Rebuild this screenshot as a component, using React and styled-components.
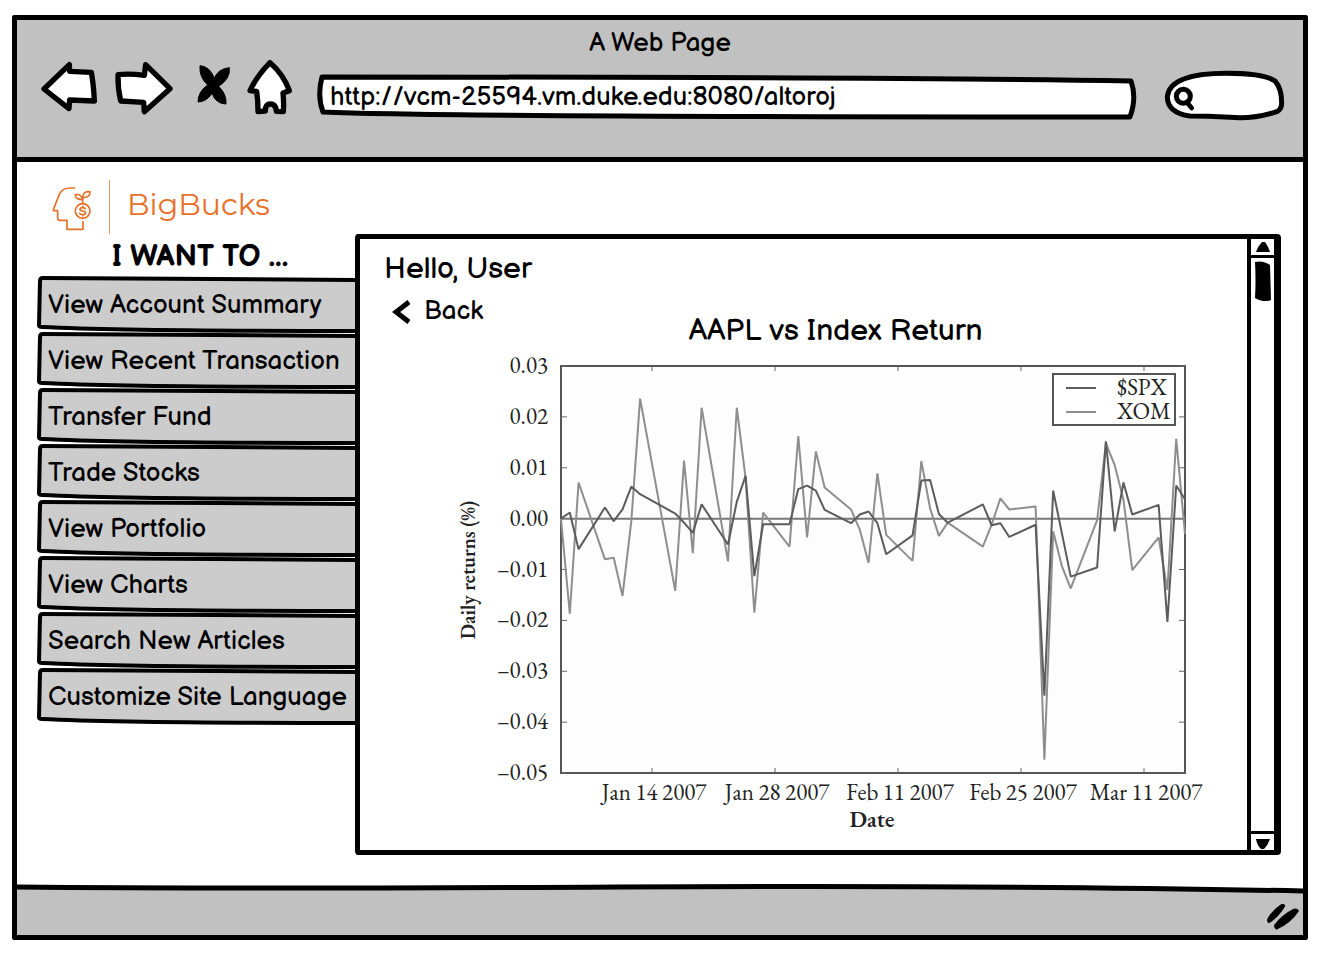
import React from 'react';
import styled, { createGlobalStyle } from 'styled-components';

const Global = createGlobalStyle`
  *, *::before, *::after { box-sizing: border-box; }
  body {
    margin: 0;
    background: #fff;
    color: #000;
    font-family: 'Balsamiq Sans', Lato, sans-serif;
    font-size: 26px;
    line-height: 32px;
  }
`;

const ink = '#000';
const chrome = '#c1c1c1';

const Page = styled.div`
  display: flex;
  min-height: 100vh;
  padding: 15px 12px 18px;
`;

const Window = styled.div`
  flex: 1;
  min-width: 0;
  display: flex;
  flex-direction: column;
  border: 5px solid ${ink};
  border-radius: 2px;
`;

const WindowHeader = styled.header`
  padding: 10px 0 37px;
  background: ${chrome};
  border-bottom: 5px solid ${ink};
`;

const WindowTitle = styled.div`
  text-align: center;
  line-height: 28px;
`;

const Toolbar = styled.div`
  display: flex;
  gap: 24px;
  height: 62px;
  padding: 0 19px 0 24px;
`;

const NavButtons = styled.div`
  display: flex;
  gap: 18px;
`;

const IconButton = styled.button`
  display: block;
  padding: 0;
  border: 0;
  background: none;
  cursor: pointer;
  svg { display: block; overflow: visible; }
`;

const Sketch = styled.svg`
  position: absolute;
  inset: 0;
  width: 100%;
  height: 100%;
  overflow: visible;
  pointer-events: none;
`;

const AddressBar = styled.div`
  position: relative;
  flex: 1;
  min-width: 0;
  height: 46px;
  margin-top: 16px;
`;

const AddressInput = styled.input`
  position: relative;
  display: block;
  width: 100%;
  height: 100%;
  padding: 0 13px;
  border: 0;
  outline: 0;
  background: none;
  color: ${ink};
  font: inherit;
`;

const SearchBox = styled.div`
  position: relative;
  flex: 0 0 124px;
`;

const SearchInput = styled.input`
  position: relative;
  display: block;
  width: 100%;
  height: 100%;
  padding: 0 12px 0 36px;
  border: 0;
  outline: 0;
  background: none;
  font: inherit;
  font-size: 20px;
`;

const Main = styled.main`
  flex: 1;
  display: flex;
  flex-direction: column;
  padding: 18px 22px 29px 20px;
`;

const Brand = styled.a`
  display: flex;
  align-items: flex-start;
  align-self: flex-start;
  height: 54px;
  padding-left: 15px;
  color: #e8702a;
  text-decoration: none;
`;

const BrandName = styled.span`
  margin-left: 17px;
  padding: 0 0 4px 17px;
  border-left: 1px solid #eb9560;
  font-family: Montserrat, Inter, sans-serif;
  font-size: 30px;
  line-height: 50px;
`;

const BrandMark = styled.svg`
  display: block;
  margin-top: 7px;
`;

const Columns = styled.div`
  flex: 1;
  display: flex;
`;

const Sidebar = styled.nav`
  flex: 0 0 318px;
`;

const SidebarTitle = styled.h2`
  margin: 0;
  padding: 7px 0 3px 8px;
  text-align: center;
  font-size: 30px;
  line-height: 32px;
`;

const MenuList = styled.ul`
  margin: 0;
  padding: 0;
  list-style: none;
`;

const MenuLink = styled.a`
  position: relative;
  display: block;
  height: 56px;
  padding: 2px 0 0 11px;
  line-height: 56px;
  white-space: nowrap;
  color: ${ink};
  text-decoration: none;
`;

const MenuLabel = styled.span`
  position: relative;
`;

const Panel = styled.section`
  position: relative;
  flex: 1;
  min-width: 0;
  display: flex;
  border: 5px solid ${ink};
  border-right: 0;
  border-radius: 4px;
  background: #fff;
`;

const PanelContent = styled.div`
  flex: 1;
  min-width: 0;
  padding: 12px 25px 10px 24px;
`;

const Greeting = styled.h1`
  margin: 0 0 10px;
  font-size: 30px;
  line-height: 36px;
  font-weight: 400;
`;

const ChartHeader = styled.div`
  display: flex;
  align-items: flex-start;
  padding-right: 34px;
`;

const BackLink = styled.a`
  flex: 0 0 98px;
  display: flex;
  align-items: center;
  gap: 14px;
  padding-left: 8px;
  line-height: 30px;
  color: ${ink};
  text-decoration: none;
`;

const ChartTitle = styled.h2`
  flex: 1;
  margin: 0;
  padding-top: 18px;
  text-align: center;
  font-size: 30px;
  line-height: 32px;
  font-weight: 400;
`;

const ChartArea = styled.div`
  padding-left: 64px;
  svg {
    display: block;
    width: 100%;
    max-width: 760px;
    margin: 0 auto;
    height: auto;
  }
`;

const AxisText = styled.text`
  font-family: 'EB Garamond', 'Liberation Serif', serif;
  font-size: ${(p) => p.$size || 23}px;
  font-weight: ${(p) => (p.$bold ? 600 : 400)};
  font-variant-numeric: lining-nums;
  fill: #222;
`;

const ScrollBar = styled.div`
  flex: 0 0 34px;
  display: flex;
  flex-direction: column;
  border-left: 4px solid ${ink};
  border-right: 7px solid ${ink};
`;

const ScrollButton = styled.button`
  flex: 0 0 19px;
  display: flex;
  align-items: center;
  justify-content: center;
  padding: ${(p) => (p.$up ? 0 : 3)}px 0 0;
  border: 0 solid ${ink};
  border-bottom-width: ${(p) => (p.$up ? 3 : 0)}px;
  border-top-width: ${(p) => (p.$up ? 0 : 3)}px;
  background: #fff;
`;

const ScrollTrack = styled.div`
  flex: 1;
  display: flex;
  justify-content: center;
  padding-top: 3px;
`;

const WindowFooter = styled.footer`
  position: relative;
  display: flex;
  justify-content: flex-end;
  align-items: center;
  height: 51px;
  padding: 14px 4px 0 0;
`;

const Grip = styled.svg`
  position: relative;
`;

function BackIcon() {
  return (
    <svg width="56" height="62" viewBox="123 174 168 186" aria-hidden="true">
      <path
        d="M132 267 L208 194 L209 214 L274 217 Q281 255 283 303 L209 300 L207 326 Z"
        fill="#fff" stroke={ink} strokeWidth="16" strokeLinejoin="round"
      />
    </svg>
  );
}

function ForwardIcon() {
  return (
    <svg width="58" height="62" viewBox="345 174 174 186" aria-hidden="true">
      <path
        d="M354 224 Q390 220 433 226 L437 194 L510 266 L433 335 L431 307 L362 303 Q353 265 354 224 Z"
        fill="#fff" stroke={ink} strokeWidth="16" strokeLinejoin="round"
      />
    </svg>
  );
}

function StopIcon() {
  return (
    <svg width="38" height="62" viewBox="573 174 114 186" aria-hidden="true">
      <path
        d="M600 197 Q628 198 643 234 Q655 206 688 203 Q692 236 656 259 Q680 282 678 312 Q648 312 636 280 Q620 305 594 306 Q594 275 623 255 Q597 232 600 197 Z"
        fill={ink} stroke={ink} strokeWidth="3"
      />
    </svg>
  );
}

function HomeIcon() {
  return (
    <svg width="46" height="62" viewBox="741 174 138 186" aria-hidden="true">
      <path
        d="M810 188 Q850 222 868 272 L849 279 Q852 310 850 335 L829 334 Q828 312 811 312 Q796 312 796 333 L774 335 Q774 300 770 274 L750 272 Q770 228 810 188 Z"
        fill="#fff" stroke={ink} strokeWidth="16" strokeLinejoin="round"
      />
    </svg>
  );
}

function BigBucksMark() {
  return (
    <BrandMark width="40" height="46" viewBox="158 42 120 138" fill="none" stroke="#e8702a" strokeWidth="5" strokeLinejoin="round" strokeLinecap="round" aria-hidden="true">
      <path d="M226 45 H212 Q190 45 181 62 L162 110 V113 H175 V136 Q175 142 181 142 H203 V169 H251 V146" />
      <circle cx="250" cy="114" r="22" />
      <path d="M258 107 Q256 104 250 104 Q242 104 242 109 Q242 113 250 114 Q259 115 259 120 Q259 125 250 125 Q243 125 241 121 M250 100 V104 M250 125 V129" />
      <path d="M250 91 V77 M249 79 Q228 81 228 65 Q246 62 249 79 M250 74 Q250 54 272 56 Q273 74 250 74" />
    </BrandMark>
  );
}

const menu = [
  'View Account Summary',
  'View Recent Transaction',
  'Transfer Fund',
  'Trade Stocks',
  'View Portfolio',
  'View Charts',
  'Search New Articles',
  'Customize Site Language',
];

function MenuItem({ label }) {
  return (
    <li>
      <MenuLink href="#">
        <Sketch viewBox="0 0 318 56" preserveAspectRatio="none" aria-hidden="true">
          <path
            d="M320 4 L6 2 Q3 2 3 5 L2 49 Q2 51 5 51 Q90 55 320 55"
            fill="#ccc" stroke={ink} strokeWidth="4" strokeLinejoin="round"
          />
        </Sketch>
        <MenuLabel>{label}</MenuLabel>
      </MenuLink>
    </li>
  );
}

/* Daily returns in percent, as [days since Jan 4 2007, return]. */
const spx = [
  [0, 0], [1, 0.12], [2, -0.6], [5, 0.22], [6, -0.05], [7, 0.18], [8, 0.63], [9, 0.48],
  [13, 0.1], [14, -0.08], [15, -0.28], [16, 0.28], [19, -0.51], [20, 0.33], [21, 0.84],
  [22, -1.13], [23, -0.11], [26, -0.11], [27, 0.58], [28, 0.65], [29, 0.55], [30, 0.17],
  [33, -0.09], [34, 0.08], [35, 0.14], [36, -0.09], [37, -0.7], [40, -0.33], [41, 0.75],
  [42, 0.76], [43, 0.09], [44, -0.08], [48, 0.28], [49, -0.13], [50, -0.09], [51, -0.36],
  [54, -0.12], [55, -3.48], [56, 0.55], [58, -1.14], [61, -0.96], [62, 1.52], [63, -0.25],
  [64, 0.71], [65, 0.08], [68, 0.27], [69, -2.03], [70, 0.65], [71, 0.38],
];
const xom = [
  [0, 0], [1, -1.87], [2, 0.71], [5, -0.8], [6, -0.77], [7, -1.52], [8, -0.05], [9, 2.36],
  [13, -1.42], [14, 1.14], [15, -0.68], [16, 2.18], [19, -0.84], [20, 2.18], [21, 0.8],
  [22, -1.85], [23, 0.12], [26, -0.55], [27, 1.62], [28, -0.37], [29, 1.32], [30, 0.61],
  [33, 0.18], [34, -0.22], [35, -0.87], [36, 0.89], [37, -0.32], [40, -0.83], [41, 1.13],
  [42, 0.2], [43, -0.34], [44, -0.08], [48, -0.55], [49, -0.12], [50, 0.4], [51, 0.18],
  [54, 0.24], [55, -4.74], [56, -0.25], [57, -0.94], [58, -1.37], [61, -0.03], [62, 1.48],
  [63, 1.05], [64, 0.37], [65, -1.01], [68, -0.37], [69, -1.4], [70, 1.57], [71, -0.3],
];

const left = 106;
const right = 730;
const top = 19;
const bottom = 426;
const px = (day) => left + (day * (right - left)) / 71;
const py = (value) => top + ((3 - value) * (bottom - top)) / 8;
const points = (series) => series.map(([d, v]) => `${px(d)},${py(v)}`).join(' ');

const yTicks = [3, 2, 1, 0, -1, -2, -3, -4, -5];
const xTicks = [
  { x: 197, label: 'Jan 14 2007' },
  { x: 320, label: 'Jan 28 2007' },
  { x: 443, label: 'Feb 11 2007' },
  { x: 566, label: 'Feb 25 2007' },
  { x: 689, label: 'Mar 11 2007' },
];

function ReturnChart() {
  return (
    <svg width="760" height="492" viewBox="0 0 760 492" role="img" aria-label="Daily returns of $SPX and XOM">
      <rect x={left} y={top} width={right - left} height={bottom - top} fill="#fefdfd" stroke="#555" strokeWidth="2" />
      <g stroke="#666" strokeWidth="1">
        {yTicks.map((t) => (
          <path key={t} d={`M${left} ${py(t)}h6M${right} ${py(t)}h-6`} />
        ))}
        {xTicks.map((t) => (
          <path key={t.label} d={`M${t.x} ${top}v5M${t.x} ${bottom}v-5`} />
        ))}
      </g>
      <path d={`M${left} ${py(0)}H${right}`} stroke="#777" strokeWidth="2" />
      <g fill="none" strokeLinejoin="bevel">
        <polyline points={points(xom)} stroke="#8e8e8e" strokeWidth="2" />
        <polyline points={points(spx)} stroke="#5c5c5c" strokeWidth="2" />
      </g>
      {yTicks.map((t) => (
        <AxisText key={t} x="93" y={py(t) + 7} textAnchor="end">
          {`${t < 0 ? '–' : ''}0.0${Math.abs(t)}`}
        </AxisText>
      ))}
      {xTicks.map((t) => (
        <AxisText key={t.label} x={t.x + 2} y="453" textAnchor="middle">{t.label}</AxisText>
      ))}
      <AxisText x="417" y="480" textAnchor="middle" $bold>Date</AxisText>
      <AxisText transform="translate(20 223) rotate(-90)" textAnchor="middle" $bold $size={20}>
        Daily returns (%)
      </AxisText>
      <rect x="598" y="27" width="122" height="51" fill="#fff" stroke="#555" strokeWidth="2" />
      <path d="M611 41h30" stroke="#5c5c5c" strokeWidth="2" />
      <path d="M611 65h30" stroke="#8e8e8e" strokeWidth="2" />
      <AxisText x="662" y="48">$SPX</AxisText>
      <AxisText x="662" y="72">XOM</AxisText>
    </svg>
  );
}

export default function App() {
  return (
    <>
      <Global />
      <Page>
        <Window>
          <WindowHeader>
            <WindowTitle>A Web Page</WindowTitle>
            <Toolbar>
              <NavButtons>
                <IconButton aria-label="Back"><BackIcon /></IconButton>
                <IconButton aria-label="Forward"><ForwardIcon /></IconButton>
                <IconButton aria-label="Stop"><StopIcon /></IconButton>
                <IconButton aria-label="Home"><HomeIcon /></IconButton>
              </NavButtons>
              <AddressBar>
                <Sketch viewBox="0 0 819 46" preserveAspectRatio="none" aria-hidden="true">
                  <path
                    d="M5 3 Q560 3 814 7 Q820 24 813 43 Q120 43 6 38 Q0 22 5 3 Z"
                    fill="#fff" stroke={ink} strokeWidth="5" strokeLinejoin="round"
                  />
                </Sketch>
                <AddressInput aria-label="Address" defaultValue="http://vcm-25594.vm.duke.edu:8080/altoroj" />
              </AddressBar>
              <SearchBox>
                <Sketch viewBox="840 174 372 186" aria-hidden="true">
                  <path
                    d="M930 348 Q862 338 862 290 Q870 220 1040 220 Q1150 220 1185 243 Q1205 265 1205 308 Q1205 328 1190 335 Q1120 358 1050 352 Q980 348 930 348 Z"
                    fill="#fff" stroke={ink} strokeWidth="15"
                  />
                  <circle cx="910" cy="289" r="21" fill="#fff" stroke={ink} strokeWidth="15" />
                  <path d="M920 306 L935 324" stroke={ink} strokeWidth="14" strokeLinecap="round" />
                </Sketch>
                <SearchInput type="search" aria-label="Search" />
              </SearchBox>
            </Toolbar>
          </WindowHeader>

          <Main>
            <Brand href="#">
              <BigBucksMark />
              <BrandName>BigBucks</BrandName>
            </Brand>
            <Columns>
              <Sidebar>
                <SidebarTitle>I WANT TO ...</SidebarTitle>
                <MenuList>
                  {menu.map((label) => <MenuItem key={label} label={label} />)}
                </MenuList>
              </Sidebar>
              <Panel>
                <PanelContent>
                  <Greeting>Hello, User</Greeting>
                  <ChartHeader>
                    <BackLink href="#">
                      <svg width="18" height="24" viewBox="0 0 18 24" aria-hidden="true">
                        <path d="M17 2 L4 12 L17 22" fill="none" stroke={ink} strokeWidth="5" />
                      </svg>
                      Back
                    </BackLink>
                    <ChartTitle>AAPL vs Index Return</ChartTitle>
                  </ChartHeader>
                  <ChartArea>
                    <ReturnChart />
                  </ChartArea>
                </PanelContent>
                <ScrollBar>
                  <ScrollButton $up aria-label="Scroll up">
                    <svg width="14" height="10" viewBox="0 0 14 10" aria-hidden="true">
                      <path d="M6 0 H9 Q12 4 14 10 H0 Q2 4 6 0 Z" />
                    </svg>
                  </ScrollButton>
                  <ScrollTrack>
                    <svg width="16" height="40" viewBox="0 0 16 40" aria-hidden="true">
                      <path d="M0 1 Q8 -1 15 4 L16 39 Q8 42 0 37 Q1 20 0 1 Z" />
                    </svg>
                  </ScrollTrack>
                  <ScrollButton aria-label="Scroll down">
                    <svg width="14" height="10" viewBox="0 0 14 10" aria-hidden="true">
                      <path d="M0 0 H14 Q12 6 8 10 H5 Q1 6 0 0 Z" />
                    </svg>
                  </ScrollButton>
                </ScrollBar>
              </Panel>
            </Columns>
          </Main>

          <WindowFooter>
            <Sketch viewBox="0 0 1286 51" preserveAspectRatio="none" aria-hidden="true">
              <path d="M0 3 Q200 5 600 3 Q1000 1 1286 7 V51 H0 Z" fill={chrome} />
              <path d="M0 3 Q200 5 600 3 Q1000 1 1286 7" fill="none" stroke={ink} strokeWidth="5" />
            </Sketch>
            <Grip width="32" height="26" viewBox="920 942 96 78" aria-hidden="true">
              <path d="M960 944 Q972 938 975 948 Q955 982 926 1000 Q918 998 921 986 Q936 960 960 944 Z" />
              <path d="M1000 956 Q1012 954 1016 963 Q990 1002 948 1019 Q940 1016 942 1004 Q964 974 1000 956 Z" />
            </Grip>
          </WindowFooter>
        </Window>
      </Page>
    </>
  );
}
